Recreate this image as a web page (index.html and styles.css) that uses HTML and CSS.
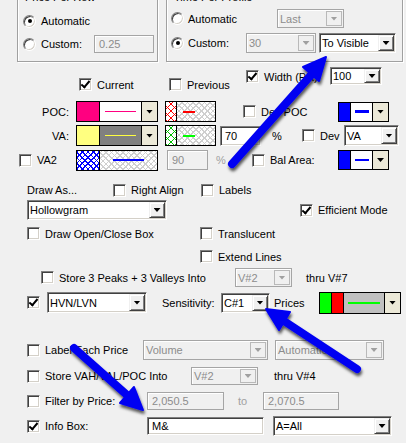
FILE: index.html
```html
<!DOCTYPE html>
<html lang="en">
<head>
    <meta charset="UTF-8">
    <title>Volume Profile Settings</title>
    <link rel="stylesheet" href="styles.css">
</head>
<body>
    <div class="dlg">
        <div class="groups">
            <div class="group group-left">
                <div class="group-title">Price Per Row</div>
                <div class="opt opt-a-l">
                    <span class="radio on"></span>
                    <span>Automatic</span>
                </div>
                <div class="opt opt-b-l">
                    <span class="radio"></span>
                    <span class="lbl-custom-l">Custom:</span>
                    <span class="field off f-tick">0.25</span>
                </div>
            </div>
            <div class="group group-right">
                <div class="group-title">Time Per Profile</div>
                <div class="opt opt-a-r">
                    <span class="radio"></span>
                    <span class="lbl-auto-r">Automatic</span>
                    <div class="combo off c-last"><span class="combo-text">Last</span><span class="drop"></span></div>
                </div>
                <div class="opt opt-b-r">
                    <span class="radio on"></span>
                    <span class="lbl-custom-r">Custom:</span>
                    <div class="combo off c-thirty"><span class="combo-text">30</span><span class="drop"></span></div>
                    <div class="combo c-visible"><span class="combo-text">To Visible</span><span class="drop"></span></div>
                </div>
            </div>
        </div>

        <div class="row r1">
            <label class="chk chk-current"><span class="box on"></span>Current</label>
            <label class="chk chk-previous"><span class="box"></span>Previous</label>
            <label class="chk chk-width"><span class="box on"></span>Width (Pix):</label>
            <div class="combo c-width"><span class="combo-text">100</span><span class="drop"></span></div>
        </div>

        <div class="row r2">
            <span class="lbl-side">POC:</span>
            <div class="cc">
                <span class="cc-swatch sw-magenta"></span>
                <span class="cc-line"><i class="ln ln-magenta"></i></span>
                <span class="cc-btn"></span>
            </div>
            <div class="sw2">
                <span class="sw2-hatch hatch-red"></span>
                <span class="sw2-area"><i class="ln2 ln2-red"></i></span>
            </div>
            <label class="chk chk-devpoc"><span class="box"></span>Dev POC</label>
            <div class="bc">
                <span class="bc-swatch"></span>
                <span class="bc-line"><i class="ln3 ln3-thick"></i></span>
                <span class="cc-btn"></span>
            </div>
        </div>

        <div class="row r3">
            <span class="lbl-side">VA:</span>
            <div class="cc">
                <span class="cc-swatch sw-yellow"></span>
                <span class="cc-line line-gray"><i class="ln ln-yellow"></i></span>
                <span class="cc-btn"></span>
            </div>
            <div class="sw2">
                <span class="sw2-hatch hatch-green"></span>
                <span class="sw2-area"><i class="ln2 ln2-green"></i></span>
            </div>
            <span class="field f-pct">70</span>
            <span class="pct">%</span>
            <label class="chk chk-dev"><span class="box"></span>Dev</label>
            <div class="combo c-va"><span class="combo-text">VA</span><span class="drop"></span></div>
        </div>

        <div class="row r4">
            <label class="chk chk-va2"><span class="box"></span>VA2</label>
            <div class="cc">
                <span class="cc-swatch hatch-blue"></span>
                <span class="cc-line line-check"><i class="ln ln-blue"></i></span>
            </div>
            <span class="field off f-ninety">90</span>
            <span class="pct pct-off">%</span>
            <label class="chk chk-bal"><span class="box"></span>Bal Area:</label>
            <div class="bc">
                <span class="bc-swatch"></span>
                <span class="bc-line"><i class="ln3"></i></span>
                <span class="cc-btn"></span>
            </div>
        </div>

        <div class="row r5">
            <span class="lbl-drawas">Draw As...</span>
            <label class="chk chk-right"><span class="box"></span>Right Align</label>
            <label class="chk"><span class="box"></span>Labels</label>
        </div>

        <div class="row r6">
            <div class="combo c-draw"><span class="combo-text">Hollowgram</span><span class="drop"></span></div>
            <label class="chk chk-efficient"><span class="box on"></span>Efficient Mode</label>
        </div>

        <div class="row r7">
            <label class="chk chk-openclose"><span class="box"></span>Draw Open/Close Box</label>
            <label class="chk"><span class="box"></span>Translucent</label>
        </div>

        <div class="row r8">
            <label class="chk chk-extend"><span class="box"></span>Extend Lines</label>
        </div>

        <div class="row r9">
            <label class="chk chk-peaks"><span class="box"></span>Store 3 Peaks + 3 Valleys Into</label>
            <div class="combo off c-v7"><span class="combo-text">V#2</span><span class="drop"></span></div>
            <span class="thru thru-7">thru V#7</span>
        </div>

        <div class="row r10">
            <label class="chk chk-hvn"><span class="box on"></span></label>
            <div class="combo c-hvn"><span class="combo-text">HVN/LVN</span><span class="drop"></span></div>
            <span class="lbl-sens">Sensitivity:</span>
            <div class="combo c-sens"><span class="combo-text">C#1</span><span class="drop"></span></div>
            <span class="lbl-prices">Prices</span>
            <div class="cc cc-hvn">
                <span class="cc-swatch sw-green"></span>
                <span class="cc-swatch sw-red"></span>
                <span class="cc-line line-silver"><i class="ln ln-green"></i></span>
                <span class="cc-btn"></span>
            </div>
        </div>

        <div class="row r11">
            <label class="chk chk-labeleach"><span class="box"></span>Label Each Price</label>
            <div class="combo off c-volume"><span class="combo-text">Volume</span><span class="drop"></span></div>
            <div class="combo off c-auto"><span class="combo-text">Automatic</span><span class="drop"></span></div>
        </div>

        <div class="row r12">
            <label class="chk chk-vah"><span class="box"></span>Store VAH/VAL/POC Into</label>
            <div class="combo off c-v4"><span class="combo-text">V#2</span><span class="drop"></span></div>
            <span class="thru thru-4">thru V#4</span>
        </div>

        <div class="row r13">
            <label class="chk chk-filter"><span class="box"></span>Filter by Price:</label>
            <span class="field off f-from">2,050.5</span>
            <span class="lbl-to">to</span>
            <span class="field off f-to">2,070.5</span>
        </div>

        <div class="row r14">
            <label class="chk chk-info"><span class="box on"></span>Info Box:</label>
            <span class="field f-info">M&amp;</span>
            <div class="combo c-all"><span class="combo-text">A=All</span><span class="drop"></span></div>
        </div>
    </div>

    <!-- callout arrows drawn over the dialog -->
    <svg class="arrows" width="406" height="443" viewBox="0 0 406 443">
        <defs>
            <filter id="shadow" x="-30%" y="-30%" width="160%" height="160%">
                <feDropShadow dx="1" dy="3" stdDeviation="1.6" flood-color="#000" flood-opacity="0.65"/>
            </filter>
        </defs>
        <g filter="url(#shadow)" fill="#0000f2" stroke="#0000f2" stroke-linejoin="round">
            <line x1="232" y1="164" x2="312" y2="74" stroke-width="8" stroke-linecap="round"/>
            <polygon points="326,57 319,81 303,67" stroke-width="2"/>

            <line x1="357" y1="369" x2="284" y2="321" stroke-width="8" stroke-linecap="round"/>
            <polygon points="266,309 290,312 279,330" stroke-width="2"/>

            <line x1="74" y1="348" x2="127" y2="395" stroke-width="8" stroke-linecap="round"/>
            <polygon points="143,410 120,403 134,387" stroke-width="2"/>
        </g>
    </svg>
</body>
</html>
```

FILE: styles.css
```css
* {
    box-sizing: border-box;
}

html, body {
    margin: 0;
    background-color: #f0f0f0;
}

body {
    font-family: "Liberation Sans", Arial, sans-serif;
    font-size: 11px;
    color: #000;
    width: 406px;
    height: 443px;
    overflow: hidden;
    position: relative;
}

.dlg {
    display: flow-root;
}

/* group boxes */
.groups {
    display: flex;
    margin-top: -3px;
}

.group {
    height: 65px;
    border: 1px solid #a0a0a0;
    box-shadow: inset 1px 1px #fff, 1px 1px #fff;
}

.group-left {
    width: 141px;
    margin-left: 17px;
}

.group-right {
    width: 237px;
    margin-left: 8px;
}

.group-title {
    width: max-content;
    height: 13px;
    line-height: 13px;
    margin: -7px 0 0 5px;
    padding: 0 2px;
    background-color: #f0f0f0;
}

.opt {
    display: flex;
    align-items: center;
}

.opt-a-l { height: 18px; margin-top: 8px; }
.opt-b-l { height: 18px; margin-top: 5px; }
.opt-a-r { height: 19px; margin-top: 5px; }
.opt-b-r { height: 20px; margin-top: 5px; }

.group-left .radio { margin: 0 5px; }
.group-right .radio { margin: 0 4px; }

.lbl-custom-l { width: 53px; }
.lbl-auto-r { width: 89px; }
.lbl-custom-r { width: 58px; }

.radio {
    width: 13px;
    height: 13px;
    flex: none;
    border-radius: 50%;
    background-color: #fff;
    border: 1px solid;
    border-color: #808080 #fff #fff #808080;
    box-shadow: inset 1px 1px #404040, inset -1px -1px #d4d0c8;
    display: flex;
    align-items: center;
    justify-content: center;
}

.radio.on::after {
    content: "";
    width: 4px;
    height: 4px;
    border-radius: 50%;
    background-color: #000;
}

/* checkboxes */
.chk {
    display: flex;
    align-items: center;
    white-space: nowrap;
    flex: none;
}

.box {
    width: 13px;
    height: 13px;
    flex: none;
    margin-right: 5px;
    background-color: #fff;
    border: 1px solid;
    border-color: #808080 #fff #fff #808080;
    box-shadow: inset 1px 1px #404040, inset -1px -1px #d4d0c8;
    display: flex;
    align-items: center;
    justify-content: center;
}

.box.on::after {
    content: "";
    width: 3px;
    height: 7px;
    margin-top: -2px;
    border: solid #000;
    border-width: 0 2px 2px 0;
    transform: rotate(40deg);
}

/* text fields */
.field {
    display: flex;
    align-items: center;
    flex: none;
    padding-left: 4px;
    background-color: #fff;
    border: 1px solid;
    border-color: #808080 #fff #fff #808080;
    box-shadow: inset 1px 1px #404040, inset -1px -1px #d4d0c8;
}

.field.off {
    background-color: #f0f0f0;
    color: #8c8c8c;
    border-color: #a5a5a5;
    box-shadow: inset 1px 1px #fff;
}

/* combo boxes */
.combo {
    display: flex;
    flex: none;
    padding: 1px;
    background-color: #fff;
    border: 1px solid;
    border-color: #808080 #fff #fff #808080;
    box-shadow: inset 1px 1px #404040, inset -1px -1px #d4d0c8;
}

.combo-text {
    flex: 1;
    display: flex;
    align-items: center;
    padding-left: 1px;
    white-space: nowrap;
    overflow: hidden;
}

.drop {
    width: 16px;
    flex: none;
    background-color: #f0f0f0;
    border: 1px solid;
    border-color: #f0f0f0 #404040 #404040 #f0f0f0;
    box-shadow: inset 1px 1px #fff, inset -1px -1px #808080;
    display: flex;
    align-items: center;
    justify-content: center;
}

.drop::after,
.cc-btn::after {
    content: "";
    width: 7px;
    height: 4px;
    background-color: #000;
    clip-path: polygon(0 0, 100% 0, 50% 100%);
}

.combo.off {
    background-color: #f0f0f0;
    color: #8c8c8c;
    border-color: #a5a5a5;
    box-shadow: inset 1px 1px #fff;
}

.combo.off .drop {
    border-color: #b9b9b9;
    box-shadow: none;
}

.combo.off .drop::after {
    background-color: #a0a0a0;
}

/* colour pickers */
.cc {
    display: flex;
    flex: none;
    width: 82px;
    height: 21px;
    margin-left: 7px;
    border: 1px solid #000;
}

.cc-swatch {
    width: 23px;
    flex: none;
    border-right: 1px solid #000;
}

.cc-line {
    flex: 1;
    display: flex;
    align-items: center;
    justify-content: center;
    background-color: #fff;
}

.cc-btn {
    width: 16px;
    flex: none;
    border-left: 1px solid #000;
    background-color: #ece9d8;
    display: flex;
    align-items: center;
    justify-content: center;
}

.ln {
    width: 31px;
    height: 1px;
}

.sw-magenta { background-color: #ff0080; }
.sw-yellow { background-color: #ffff80; }
.sw-green { background-color: #00ff00; }
.sw-red { background-color: #ff0000; }
.ln-magenta { background-color: #ff0080; }
.ln-yellow { background-color: #ffff40; }
.ln-blue { background-color: #0000ff; height: 2px; }
.ln-green { background-color: #00ff00; height: 2px; width: 32px; }
.line-gray { background-color: #808080; }
.line-silver { background-color: #c0c0c0; }

.line-check,
.sw2-area {
    background:
        repeating-linear-gradient(45deg, #cfcfcf 0 1px, transparent 1px 4px),
        repeating-linear-gradient(-45deg, #cfcfcf 0 1px, transparent 1px 4px),
        #fff;
}

.hatch-blue {
    background:
        repeating-linear-gradient(45deg, #0000ff 0 1px, transparent 1px 4px),
        repeating-linear-gradient(-45deg, #0000ff 0 1px, transparent 1px 4px),
        #fff;
}

.hatch-red {
    background:
        repeating-linear-gradient(45deg, #ff0000 0 1px, transparent 1px 5px),
        repeating-linear-gradient(-45deg, #ff0000 0 1px, transparent 1px 5px),
        #fff;
}

.hatch-green {
    background:
        repeating-linear-gradient(45deg, #00c000 0 1px, transparent 1px 5px),
        repeating-linear-gradient(-45deg, #00c000 0 1px, transparent 1px 5px),
        #fff;
}

.cc-hvn {
    height: 22px;
    margin-left: 0;
}

.cc-hvn .cc-swatch {
    width: 12px;
}

.sw2 {
    display: flex;
    flex: none;
    width: 51px;
    height: 21px;
    margin-left: 7px;
    border: 1px solid #000;
}

.sw2-hatch {
    width: 11px;
    flex: none;
    border-right: 1px solid #000;
}

.sw2-area {
    flex: 1;
    display: flex;
    align-items: center;
}

.ln2 {
    width: 12px;
    height: 2px;
    margin-left: 6px;
}

.ln2-red { background-color: #ff0000; }
.ln2-green { background-color: #00ff00; }

.bc {
    display: flex;
    flex: none;
    width: 51px;
    height: 20px;
    border: 1px solid #000;
}

.bc-swatch {
    width: 12px;
    flex: none;
    background-color: #0000ff;
    border-right: 1px solid #000;
}

.bc-line {
    flex: 1;
    display: flex;
    align-items: center;
    justify-content: center;
    background-color: #fff;
}

.ln3 {
    width: 14px;
    height: 2px;
    background-color: #0000ff;
}

.ln3-thick {
    height: 3px;
}

/* rows */
.row {
    display: flex;
    align-items: center;
}

.r1 { height: 24px; margin-top: 5px; align-items: flex-start; }
.r2 { height: 21px; margin-top: 10px; }
.r3 { height: 21px; margin-top: 3px; }
.r4 { height: 22px; margin-top: 3px; }
.r5 { height: 14px; margin-top: 12px; }
.r6 { height: 20px; margin-top: 3px; }
.r7 { height: 13px; margin-top: 7px; }
.r8 { height: 13px; margin-top: 10px; }
.r9 { height: 19px; margin-top: 5px; }
.r10 { height: 23px; margin-top: 4px; }
.r11 { height: 20px; margin-top: 26px; }
.r12 { height: 18px; margin-top: 7px; }
.r13 { height: 18px; margin-top: 7px; }
.r14 { height: 20px; margin-top: 6px; }

/* row 1 */
.chk-current { width: 90px; margin: 11px 0 0 79px; }
.chk-previous { width: 77px; margin-top: 11px; }
.chk-width { width: 84px; margin-top: 3px; }
.c-width { width: 52px; height: 18px; }

/* rows 2-4 */
.lbl-side {
    width: 69px;
    text-align: right;
    flex: none;
}

.chk-devpoc { width: 95px; margin-left: 27px; }
.f-pct { width: 41px; height: 20px; margin-left: 4px; }
.pct { width: 30px; margin-left: 11px; flex: none; }
.chk-dev { width: 42px; }
.c-va { width: 55px; height: 21px; }

.chk-va2 { width: 50px; margin-left: 19px; }
.f-ninety { width: 41px; height: 20px; margin-left: 9px; }
.pct-off { width: 36px; margin-left: 8px; color: #a0a0a0; }
.chk-bal { width: 86px; }

/* draw options */
.lbl-drawas { width: 86px; margin-left: 27px; flex: none; }
.chk-right { width: 88px; }
.c-draw { width: 140px; height: 20px; margin-left: 27px; }
.chk-efficient { margin-left: 133px; }
.chk-openclose { width: 173px; margin-left: 27px; }
.chk-extend { margin-left: 200px; }

.chk-peaks { width: 194px; margin-left: 41px; }
.c-v7 { width: 57px; height: 19px; }
.thru-7 { margin-left: 14px; }

/* HVN row */
.chk-hvn { margin-left: 27px; }
.chk-hvn .box { margin-right: 7px; }
.c-hvn { width: 100px; height: 21px; }
.lbl-sens { width: 59px; margin-left: 15px; flex: none; }
.c-sens { width: 49px; height: 20px; }
.lbl-prices { width: 45px; margin-left: 4px; flex: none; }

/* bottom rows */
.chk-labeleach { width: 116px; margin-left: 27px; }
.c-volume { width: 125px; height: 20px; }
.c-auto { width: 109px; height: 20px; margin-left: 7px; }

.chk-vah { width: 164px; margin-left: 27px; }
.c-v4 { width: 67px; height: 18px; }
.thru-4 { margin-left: 16px; }

.chk-filter { width: 120px; margin-left: 27px; }
.f-from { width: 77px; height: 18px; }
.lbl-to { width: 25px; margin-left: 14px; color: #a0a0a0; flex: none; }
.f-to { width: 76px; height: 18px; }

.chk-info { width: 120px; margin-left: 27px; }
.f-info { width: 117px; height: 18px; }
.c-all { width: 119px; height: 20px; margin-left: 9px; }

/* top group controls */
.f-tick { width: 60px; height: 18px; }
.c-last { width: 67px; height: 19px; }
.c-thirty { width: 70px; height: 20px; }
.c-visible { width: 77px; height: 20px; margin-left: 3px; }

.arrows {
    position: absolute;
    top: 0;
    left: 0;
    pointer-events: none;
}
```
